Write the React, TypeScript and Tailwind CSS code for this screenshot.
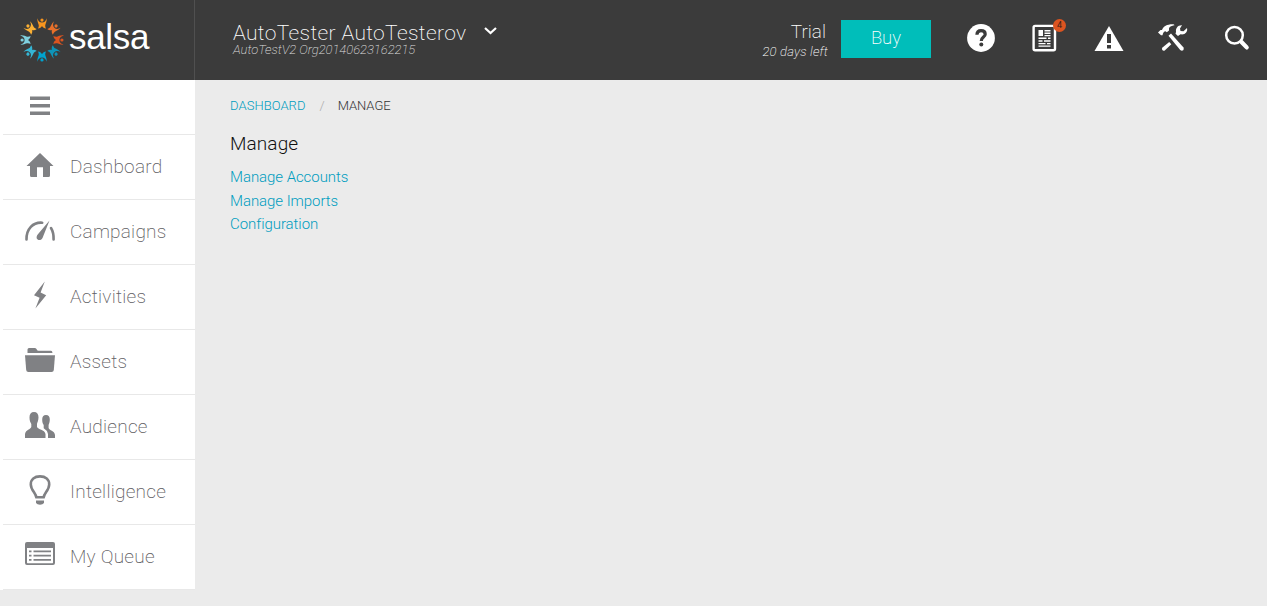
import type { ReactNode } from "react";

const FIGURE_COLORS = [
  "#f7941e",
  "#e8702a",
  "#dd5420",
  "#0d94b8",
  "#00a3cf",
  "#35b5d4",
  "#7fd0df",
  "#fbb034",
];

function SalsaMark() {
  return (
    <svg width="46" height="46" viewBox="-23 -23 46 46" className="shrink-0">
      {FIGURE_COLORS.map((color, i) => (
        <g key={color} fill={color} transform={`rotate(${i * 45})`}>
          <circle cx="0" cy="-19.900" r="1.600" />
          <path d="M-4.600-21.800C-4-19-2.400-17.400 0-17.400S4-19 4.600-21.800C5-18.500 3.600-16.500 3.300-15C3-13.600 3.600-12.400 4-11.400C2.200-11.600.8-12.600 0-14C-.8-12.600-2.200-11.600-4-11.400C-3.600-12.400-3-13.600-3.300-15C-3.600-16.500-5-18.500-4.600-21.800Z" />
        </g>
      ))}
    </svg>
  );
}

const glyph = "block h-[32px] w-[32px] shrink-0";

const MenuIcon = () => (
  <svg className="block h-[20px] w-[20px]" viewBox="0 0 20 20" fill="#808184">
    <path d="M0 .6H20V4H0ZM0 8H20V11.500H0ZM0 15.600H20V19H0Z" />
  </svg>
);

const HomeIcon = () => (
  <svg className={glyph} viewBox="0 0 32 32" fill="#808184">
    <path d="M16 4 2.500 17H6V26.500Q6 28 7.500 28H13V18.200H19V28H24.500Q26 28 26 26.500V17H29.500Z" />
  </svg>
);

const GaugeIcon = () => (
  <svg className={glyph} viewBox="0 0 32 32" fill="none" stroke="#808184" strokeWidth="2.600" strokeLinecap="round">
    <path d="M2.500 25.500C2.300 15 9 8 18.200 8.700" />
    <path d="M27 14Q29.800 18.500 29.600 25.500" />
    <path d="M25.500 6.600 13.700 20.500C11.500 23.500 13 26 15.300 26C18 26 18.600 23.800 19.300 22Z" fill="#808184" stroke="none" />
  </svg>
);

const BoltIcon = () => (
  <svg className={glyph} viewBox="0 0 32 32" fill="#808184">
    <path d="M20.800 2.500 10 16.200 15.600 18.700 11.400 29.500 22.200 16.200 16.600 13.500Z" />
  </svg>
);

const FolderIcon = () => (
  <svg className={glyph} viewBox="0 0 32 32" fill="#808184">
    <path d="M3.500 9V5.500Q3.600 4 5 4H11Q12.200 4 12.800 5.500Q13.200 6.800 14.500 6.800H27Q28.300 6.800 28.500 9Z" />
    <path d="M1 11.200H31L29.800 26Q29.600 28 27.600 28H4.400Q2.400 28 2.200 26Z" />
  </svg>
);

const PeopleIcon = () => (
  <svg className={glyph} viewBox="0 0 32 32" fill="#808184">
    <path d="M10 3C13 3 14.600 5 14.500 8.500C14.400 12 13.300 13.500 13 15V18C14 20.500 20.600 20.500 21.500 25V29H1V25C2 20.500 6.500 20.500 7.300 18V15C6.500 13.500 5.500 12 5.500 8.500C5.400 5 7 3 10 3Z" />
    <path d="M22 6C24.600 6 25.900 8 25.800 10.800C25.700 13.500 25 14.800 24.600 16V19C25.200 21.500 30.500 21.500 31 26V29H24V25Q23.300 21.300 19.700 19.300V16C18.900 14.800 18.200 13.500 18.200 10.800C18.100 8 19.400 6 22 6Z" />
  </svg>
);

const BulbIcon = () => (
  <svg className={glyph} viewBox="0 0 32 32">
    <path d="M12.300 23.300C12 19.200 6.800 16 6.800 10.400C6.800 5.500 10.500 2.400 16 2.400S25.200 5.500 25.200 10.400C25.200 16 20 19.200 19.700 23.300Z" fill="none" stroke="#808184" strokeWidth="2.600" strokeLinejoin="round" />
    <path d="M12 26.500H20V29Q18.800 30.800 16 30.800T12 29Z" fill="#808184" />
  </svg>
);

const QueueIcon = () => (
  <svg className={glyph} viewBox="0 0 32 32" fill="#808184">
    <path fillRule="evenodd" d="M3 3H29Q31 3 31 5V24Q31 26 29 26H3Q1 26 1 24V5Q1 3 3 3ZM3 9V23.600Q3 24.200 3.600 24.200H28.400Q29 24.200 29 23.600V9Z" />
    <path d="M5 11.500H7.500V13.300H5ZM9.500 11.500H27V13.300H9.500ZM5 15.700H7.500V17.500H5ZM9.500 15.700H27V17.500H9.500ZM5 20H7.500V21.800H5ZM9.500 20H27V21.800H9.500Z" />
  </svg>
);

const HelpIcon = () => (
  <svg className={glyph} viewBox="0 0 32 32">
    <circle cx="16" cy="16" r="13.900" fill="#fff" />
    <path d="M11.900 12.800C12 9.900 13.600 8.700 16 8.700C18.500 8.700 20.200 10 20.200 12.200C20.200 15.300 16.300 15 16.300 19" fill="none" stroke="#3b3b3b" strokeWidth="3.200" />
    <circle cx="16.300" cy="22.400" r="2" fill="#3b3b3b" />
  </svg>
);

const NewsIcon = () => (
  <svg className={glyph} viewBox="0 0 32 32">
    <rect x="4.600" y="3.900" width="21.400" height="24.300" rx="1.500" fill="none" stroke="#fff" strokeWidth="2.400" />
    <path d="M9.500 8H14V14H9.500ZM15.500 8H21.500V9.500H15.500ZM15.500 10.500H21.500V12H15.500ZM15.500 12.900H21.500V14.300H15.500ZM9.500 15.500H17.500V17H9.500ZM19 15.500H21.500V17H19ZM9.500 18.300H13.500V19.700H9.500ZM15 18.300H21.500V19.700H15ZM9.500 21H16.500V22.300H9.500ZM18 21H21.500V22.300H18ZM9.500 23.500H21.500V24.800H9.500Z" fill="#fff" />
  </svg>
);

const WarningIcon = () => (
  <svg className={glyph} viewBox="0 0 32 32">
    <path d="M16 4 30.500 29H1.500Z" fill="#fff" />
    <path d="M14 12H18V21H14ZM14 23H18V26.500H14Z" fill="#3b3b3b" />
  </svg>
);

const ToolsIcon = () => (
  <svg className={glyph} viewBox="0 0 32 32" fill="#fff">
    <path d="M1 10.500 3.500 8 5 8C6.500 4.200 10.500 2 17 2.400L17.500 3.200C13.500 4 12 5 12 7L12 8.500 9.800 10.300 8.500 9.300 7 9.800 6 11.500 5.500 13.300 4 13.300Z" />
    <path d="M11.500 13.800 14 11.500 26.500 25.500Q27.200 27 26.200 28.300Q24.800 29.200 23.200 28Z" />
    <path d="M19 10C18.500 6 21 3 25 3.300L23 6.500 23.500 9 26.500 9.300 30 6C31 9.800 28 13.200 23.500 12.300L21 14 18.500 11.800Z" />
    <path d="M12.200 20 14.300 22.200 8 28.200Q6.500 29.400 5.300 28Q4.300 26.700 5.500 25.500Z" />
  </svg>
);

const SearchIcon = () => (
  <svg className={glyph} viewBox="0 0 32 32" fill="none" stroke="#fff">
    <circle cx="13.500" cy="13.200" r="8.300" strokeWidth="2.500" />
    <path d="m20.500 20 5.200 5.400" strokeWidth="4.200" strokeLinecap="round" />
  </svg>
);

const NAV: { label: string; icon: ReactNode }[] = [
  { label: "Dashboard", icon: <HomeIcon /> },
  { label: "Campaigns", icon: <GaugeIcon /> },
  { label: "Activities", icon: <BoltIcon /> },
  { label: "Assets", icon: <FolderIcon /> },
  { label: "Audience", icon: <PeopleIcon /> },
  { label: "Intelligence", icon: <BulbIcon /> },
  { label: "My Queue", icon: <QueueIcon /> },
];

function Header() {
  return (
    <header className="flex h-[80px] bg-[#3b3b3b] text-white">
      <div className="flex h-full w-[195px] shrink-0 border-r border-[#505050] pt-[17px] pl-[19px]">
        <SalsaMark />
        <span className="pl-[4px] font-['Liberation_Sans',sans-serif] text-[35px] leading-[39px] font-normal tracking-[-0.3px]">
          salsa
        </span>
      </div>
      <div className="flex pt-[23px] pl-[38px]">
        <div className="whitespace-nowrap">
          <div className="w-[233px] text-[21px] leading-[21px] font-extralight tracking-[0.350px]">AutoTester AutoTesterov</div>
          <div className="text-[13px] leading-[12px] font-extralight tracking-[-0.040px] text-[#dddddd] italic">
            AutoTestV2 Org20140623162215
          </div>
        </div>
        <svg className="mt-[3px] ml-[18px] block h-[10px] w-[14px]" viewBox="0 0 14 10" fill="none" stroke="#fff" strokeWidth="2.200">
          <path d="m1 2 5.500 5 5.500-5" />
        </svg>
      </div>
      <div className="ml-auto flex">
        <div className="pt-[20px] text-right whitespace-nowrap">
          <div className="pr-[2px] text-[19px] leading-[24px] font-extralight">Trial</div>
          <div className="text-[13px] leading-[15px] font-extralight tracking-[0.200px] italic">20 days left</div>
        </div>
        <button className="mt-[20px] ml-[13px] h-[38px] w-[90px] bg-[#00beba] pb-[2px] text-[18.500px] leading-[36px] font-extralight">
          Buy
        </button>
        <div className="flex gap-[32px] pt-[22px] pr-[14px] pl-[34px]">
          <HelpIcon />
          <div className="relative h-[32px]">
            <NewsIcon />
            <span className="absolute -top-[3px] left-[24px] flex h-[13px] w-[13px] items-center justify-center rounded-full bg-[#dc5420] text-[9px] leading-none font-normal text-[#3b2018]">
              4
            </span>
          </div>
          <WarningIcon />
          <ToolsIcon />
          <SearchIcon />
        </div>
      </div>
    </header>
  );
}

export default function App() {
  return (
    <div className="h-[606px] w-[1267px] overflow-hidden bg-[#ebebeb] font-['Roboto',sans-serif] font-light">
      <Header />
      <div className="flex">
        <nav className="h-[510px] w-[195px] shrink-0 bg-white pl-[3px]">
          <div className="h-[55px] border-b border-[#e8e8e8] pt-[16px] pl-[27px]">
            <MenuIcon />
          </div>
          {NAV.map((item) => (
            <a
              key={item.label}
              className="flex h-[65px] gap-[14px] border-b border-[#e8e8e8] pt-[14px] pl-[21px] text-[19px] leading-[36px] font-extralight tracking-[0.240px] text-[#5f6063]"
            >
              {item.icon}
              <span>{item.label}</span>
            </a>
          ))}
        </nav>
        <main className="pt-[16px] pl-[35px]">
          <div className="flex text-[13px] leading-[20px]">
            <a className="tracking-[0.060px] text-[#009dbf]">DASHBOARD</a>
            <span className="pr-[13px] pl-[14px] text-[#aaaaaa]">/</span>
            <span className="tracking-[-0.050px] text-[#333333]">MANAGE</span>
          </div>
          <h1 className="mt-[15px] text-[19px] leading-[26px] tracking-[0.100px] text-[#111111]">Manage</h1>
          <div className="mt-[9px] flex flex-col text-[15px] leading-[23.500px] tracking-[-0.060px] text-[#009dbf]">
            <a>Manage Accounts</a>
            <a>Manage Imports</a>
            <a>Configuration</a>
          </div>
        </main>
      </div>
    </div>
  );
}
